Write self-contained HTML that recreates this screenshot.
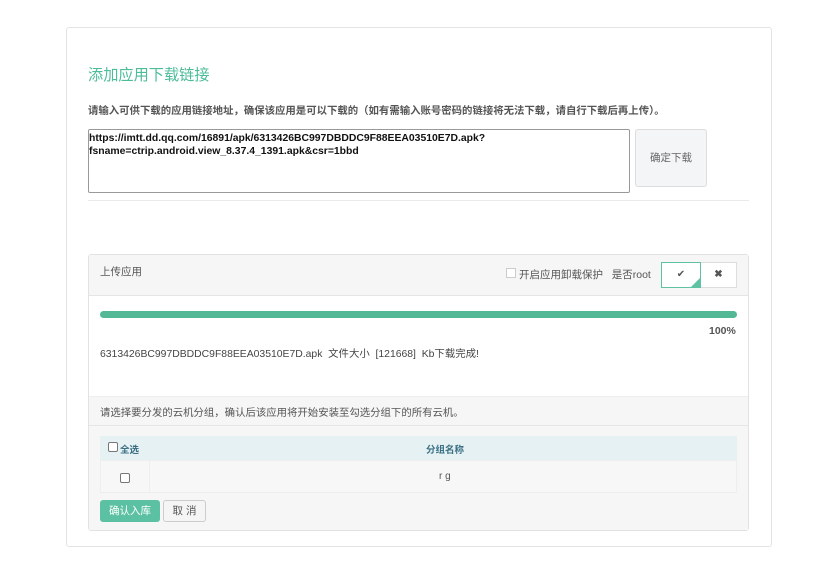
<!DOCTYPE html>
<html><head><meta charset="utf-8"><style>
*{box-sizing:border-box;margin:0;padding:0}
body{width:829px;height:571px;background:#fff;font-family:"Liberation Sans","Noto Sans CJK SC",sans-serif;position:relative;overflow:hidden;color:#555}
.a{position:absolute}
</style></head><body>
<div class="a" style="left:66px;top:27px;width:706px;height:520px;border:1px solid #e3e3e3;border-radius:3px"></div>
<div class="a" style="left:88px;top:63px;font-size:15.2px;color:#4cbc99">添加应用下载链接</div>
<div class="a" style="left:88px;top:102px;font-size:10.4px;font-weight:bold;color:#555">请输入可供下载的应用链接地址，确保该应用是可以下载的（如有需输入账号密码的链接将无法下载，请自行下载后再上传）。</div>
<div class="a" style="left:88px;top:129px;width:542px;height:64px;border:1px solid #999;border-radius:2px;padding:2px 0 0 0;font-size:10.4px;font-weight:bold;color:#111;line-height:13px">https://imtt.dd.qq.com/16891/apk/6313426BC997DBDDC9F88EEA03510E7D.apk?<br>fsname=ctrip.android.view_8.37.4_1391.apk&amp;csr=1bbd</div>
<div class="a" style="left:635px;top:129px;width:72px;height:58px;border:1px solid #ddd;border-radius:3px;background:#f4f5f6;font-size:10.5px;color:#666;text-align:center;line-height:56px">确定下载</div>
<div class="a" style="left:88px;top:200px;width:661px;height:1px;background:#eaeaea"></div>
<div class="a" style="left:88px;top:254px;width:661px;height:277px;border:1px solid #e2e2e2;border-radius:3px;background:#fff"></div>
<div class="a" style="left:89px;top:255px;width:659px;height:41px;background:#f5f6f5;border-bottom:1px solid #e5e5e5"></div>
<div class="a" style="left:100px;top:264px;font-size:10.5px;color:#555">上传应用</div>
<div class="a" style="left:506px;top:268px;width:10px;height:10px;border:1px solid #ccc;background:#fff"></div>
<div class="a" style="left:519px;top:267px;font-size:10.5px;color:#555">开启应用卸载保护&nbsp;&nbsp;&nbsp;是否root</div>
<div class="a" style="left:661px;top:262px;width:40px;height:26px;border:1px solid #5fc2a3;background:#fff;font-size:10px;text-align:center;line-height:24px;color:#555">✔</div>
<div class="a" style="left:690px;top:277px;width:0;height:0;border-left:11px solid transparent;border-bottom:11px solid #5fc2a3"></div>
<div class="a" style="left:701px;top:262px;width:36px;height:26px;border:1px solid #ddd;border-left:none;background:#fff;font-size:10px;font-weight:bold;text-align:center;line-height:24px;color:#555">✖</div>
<div class="a" style="left:100px;top:311px;width:637px;height:7px;border-radius:4px;background:#52b896"></div>
<div class="a" style="left:709px;top:325px;font-size:10.5px;font-weight:bold;color:#555">100%</div>
<div class="a" style="left:100px;top:345px;font-size:10.4px;color:#444">6313426BC997DBDDC9F88EEA03510E7D.apk&nbsp;&nbsp;文件大小&nbsp;&nbsp;[121668]&nbsp;&nbsp;Kb下载完成!</div>
<div class="a" style="left:89px;top:396px;width:659px;height:134px;background:#f5f6f5;border-top:1px solid #eee"></div>
<div class="a" style="left:89px;top:425px;width:659px;height:1px;background:#e6e6e6"></div>
<div class="a" style="left:100px;top:404px;font-size:10.4px;color:#555">请选择要分发的云机分组，确认后该应用将开始安装至勾选分组下的所有云机。</div>
<div class="a" style="left:100px;top:436px;width:637px;height:24px;background:#e6f1f3"></div>
<div class="a" style="left:108px;top:442px;width:10px;height:10px;border:1px solid #777;border-radius:2px;background:#fff"></div>
<div class="a" style="left:120px;top:442px;font-size:9.5px;font-weight:bold;color:#3a6f84">全选</div>
<div class="a" style="left:426px;top:442px;font-size:9.5px;font-weight:bold;color:#3a6f84">分组名称</div>
<div class="a" style="left:100px;top:460px;width:637px;height:33px;border:1px solid #eee;background:#f7f7f7"></div>
<div class="a" style="left:149px;top:460px;width:1px;height:33px;background:#eee"></div>
<div class="a" style="left:120px;top:473px;width:10px;height:10px;border:1px solid #777;border-radius:2px;background:#fff"></div>
<div class="a" style="left:439px;top:471px;font-size:10px;color:#555">r g</div>
<div class="a" style="left:100px;top:500px;width:60px;height:22px;border-radius:3px;background:#5cc1a2;color:#fff;font-size:10.5px;text-align:center;line-height:22px">确认入库</div>
<div class="a" style="left:163px;top:500px;width:43px;height:22px;border-radius:3px;border:1px solid #ccc;background:#f5f5f5;color:#555;font-size:10.5px;text-align:center;line-height:20px">取 消</div>
</body></html>
